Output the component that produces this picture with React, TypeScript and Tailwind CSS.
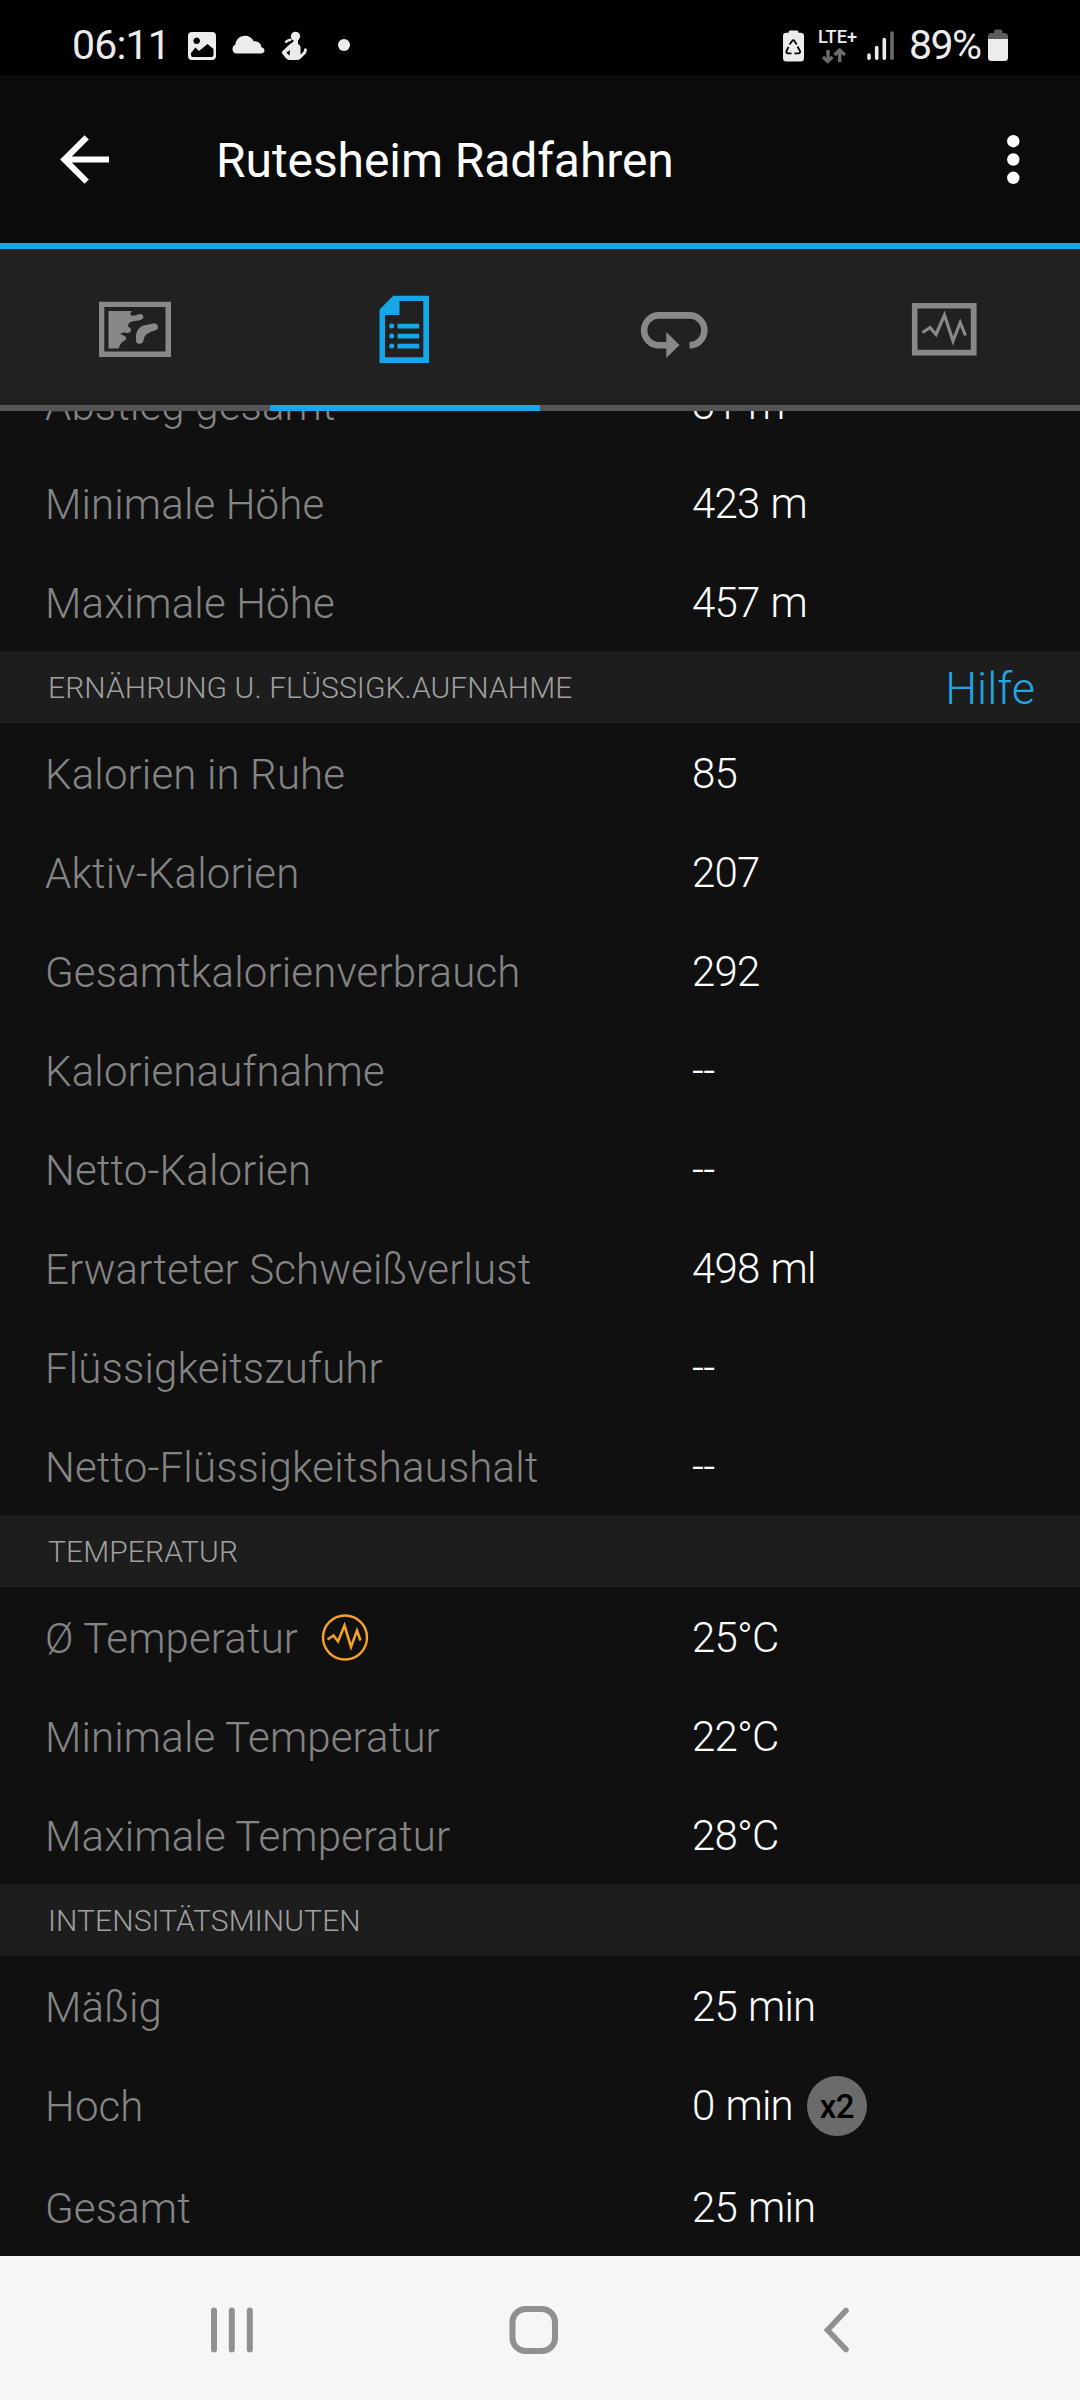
import type { ReactNode } from "react";

type Row = { label: string; value: string; chart?: boolean; badge?: string };
type Section = { title?: string; help?: string; rows: Row[] };

const sections: Section[] = [
  {
    rows: [
      { label: "Abstieg gesamt", value: "31 m" },
      { label: "Minimale Höhe", value: "423 m" },
      { label: "Maximale Höhe", value: "457 m" },
    ],
  },
  {
    title: "ERNÄHRUNG U. FLÜSSIGK.AUFNAHME",
    help: "Hilfe",
    rows: [
      { label: "Kalorien in Ruhe", value: "85" },
      { label: "Aktiv-Kalorien", value: "207" },
      { label: "Gesamtkalorienverbrauch", value: "292" },
      { label: "Kalorienaufnahme", value: "--" },
      { label: "Netto-Kalorien", value: "--" },
      { label: "Erwarteter Schweißverlust", value: "498 ml" },
      { label: "Flüssigkeitszufuhr", value: "--" },
      { label: "Netto-Flüssigkeitshaushalt", value: "--" },
    ],
  },
  {
    title: "TEMPERATUR",
    rows: [
      { label: "Ø Temperatur", value: "25°C", chart: true },
      { label: "Minimale Temperatur", value: "22°C" },
      { label: "Maximale Temperatur", value: "28°C" },
    ],
  },
  {
    title: "INTENSITÄTSMINUTEN",
    rows: [
      { label: "Mäßig", value: "25 min" },
      { label: "Hoch", value: "0 min", badge: "x2" },
      { label: "Gesamt", value: "25 min" },
    ],
  },
];

function StatusBar() {
  return (
    <div className="flex h-[75px] items-center bg-black text-[#ececec]">
      <span className="ml-[72px] w-[116px] text-[41px] leading-[75px] tracking-[-0.800px] pt-[15px]">06:11</span>
      <svg className="h-[75px] w-[170px]" viewBox="188 0 170 75" fill="#ececec">
        {/* gallery */}
        <path fillRule="evenodd" d="M192 32h20a4 4 0 0 1 4 4v20a4 4 0 0 1-4 4h-20a4 4 0 0 1-4-4V36a4 4 0 0 1 4-4zM191 53v2a2 2 0 0 0 2 2h18.500a2 2 0 0 0 2-2v-6l-6-5-8.500 7-3.500-3.500zM196.700 37.500a3.300 3.300 0 1 0 .01 0z" />
        {/* cloud */}
        <path d="M236 53.500a4.800 4.800 0 0 1-.7-9c.8-5 4.200-8.700 9.700-8.700 3.800 0 7 2 8.600 5.400 4.700-.3 7.400 2.200 7.900 6 4.300 1 3.700 6.300-.5 6.300z" />
        {/* fitness */}
        <circle cx="295.500" cy="36.300" r="4.600" />
        <path d="M284.500 42q2-3.500 7.500-3.500l-1 2.500q-3 0-4.500 2.300z" />
        <path fillRule="evenodd" d="M293.500 39.500h4.500v4.500q2.800 1 2.600 4.500-.2 2.500 0 6l2.500-2.500q1.200-1 1-3 1.200-1.500 2.600 0 .5 3.500-2 5.500l-4 4q-1.500 1.500-4.500 1.500h-6q-2.300 0-4-1.500l-4-5q-1-1.300.5-2.500l6.800-6.500q2.500-1.500 4-3zM286.300 52.500l3.200 3.300.6-5.500z" />
        <circle cx="344" cy="45" r="6" />
      </svg>
      <svg className="ml-auto h-[75px] w-[126px]" viewBox="778 0 126 75" fill="#ececec">
        {/* recycling battery */}
        <path d="M790.500 30.500h6.500q1.500 0 1.500 2.200h2q3.500 0 3.500 3.300v22q0 3.500-3.500 3.500h-14q-3.500 0-3.500-3.500V36q0-3.300 3.500-3.300h2q0-2.200 2-2.200z" />
        <g fill="none" stroke="#000" strokeWidth="1.800" strokeLinejoin="round">
          <path d="M789.500 44.500l3-4q.8-.8 1.600 0l2.600 4" />
          <path d="M788.500 47l-2 4q-.6 2.200 1.500 2.400h3.500" />
          <path d="M797.500 46.500l2.500 4.500q.5 2.300-1.500 2.400h-4" />
        </g>
        <text x="818" y="43" fontSize="18.500" fontWeight="500" textLength="39" lengthAdjust="spacingAndGlyphs">LTE+</text>
        <g fill="none" stroke="#6b6b6b" strokeWidth="3.400">
          <path d="M828 50v11M823 57l4.700 4.500L832.500 57" />
          <path d="M839.700 62V50.500M834.500 55l5.200-5 5.200 5" />
        </g>
        <g strokeWidth="3.600" strokeLinecap="round" stroke="#ececec">
          <path d="M869 55v3.300M876.700 47.500v10.800M884.300 39.500v18.800" />
          <path d="M892 33v25.300" stroke="#6b6b6b" />
        </g>
      </svg>
      <span className="ml-[5px] w-[77px] text-[41px] leading-[75px] tracking-[-1.500px] pt-[15px] whitespace-nowrap">89%</span>
      <svg className="mr-[68px] h-[75px] w-[26px]" viewBox="986 0 26 75">
        <path fill="#5c5c5c" d="M994 31.500q0-2 2-2h4.500q2 0 2 2V33h2q3.500 0 3.500 3.500V40h-20v-3.500q0-3.500 3.500-3.500h2.500z" />
        <path fill="#ececec" d="M988 39h20v18.500q0 3.500-3.500 3.500h-13q-3.500 0-3.500-3.500z" />
      </svg>
    </div>
  );
}

function AppBar() {
  return (
    <header className="flex h-[174px] items-center border-b-[6px] border-[#15a7e8] bg-[#0b0b0b]">
      <svg className="ml-[54px] h-[60px] w-[60px]" viewBox="0 0 60 60" fill="none" stroke="#fff" strokeWidth="6">
        <path d="M32.700 8.300L10.400 30.500l22.300 22.200M10.400 30.500H55" />
      </svg>
      <h1 className="ml-[102px] pt-[4px] text-[48px] leading-[56px] tracking-[-0.080px] text-white">Rutesheim Radfahren</h1>
      <svg className="ml-auto mr-[47px] h-[60px] w-[40px]" viewBox="0 0 40 60" fill="#fff">
        <circle cx="20.300" cy="12.200" r="6.200" />
        <circle cx="20.300" cy="30.500" r="6.200" />
        <circle cx="20.300" cy="48.800" r="6.200" />
      </svg>
    </header>
  );
}

function Tab({ active, children }: { active?: boolean; children: ReactNode }) {
  return (
    <div
      className={
        active
          ? "flex h-[162px] w-[270px] justify-center border-b-[6px] border-[#15a7e8] pt-[35px] text-[#15a7e8]"
          : "flex h-[162px] w-[270px] justify-center border-b-[6px] border-[#555] pt-[35px] text-[#888]"
      }
    >
      <svg className="h-[90px] w-[90px]" viewBox="0 0 90 90" fill="currentColor">
        {children}
      </svg>
    </div>
  );
}

function Tabs() {
  return (
    <nav className="flex bg-[#212121]">
      <Tab>
        <path fillRule="evenodd" d="M9 17.700h72v55.300H9zM14.300 23v44.500h61.200V23z" />
        <path d="M18.500 27h23.300q-2.500 3-.5 4.500 3.200.5 6-.8 4-1.800 6 1 .8 3.500-3.500 4.500l-6.500 1q-5 .5-5.500 5.300 3.800 1.500 3 4.800-1.200 2.500-5 1.500-3.500-.8-5.500 1.500 5 1.300 6 3.500.2 2-3 3.500-3.800 2.800-4.500 7.300H18.500z" />
        <path d="M46 52q0-4.500 3.500-8 2.500-2.800 6.500-3 3-.2 5.500-1.300 4.500-1.200 6.300 1.800 1 4-2.800 5-7.500 2-10 5.500-1.300 2-1.500 4.500-1 3.600-4.300 3.300-3.500-.3-3.200-4z" />
      </Tab>
      <Tab active>
        <path fillRule="evenodd" d="M33.300 11.700H69V79H19.500V25.500zM39.500 17v14H25v42.200h38.300V17z" />
        <circle cx="31.700" cy="42" r="2.500" />
        <circle cx="31.700" cy="52" r="2.500" />
        <circle cx="31.700" cy="62" r="2.500" />
        <path d="M37.500 39.700h21.700v4.700H37.500zM37.500 49.700h21.700v4.700H37.500zM37.500 59.700h21.700v4.700H37.500z" />
      </Tab>
      <Tab>
        <path fill="none" stroke="currentColor" strokeWidth="6.600" d="M59.500 61.200a14.900 14.900 0 0 0 0-29.800H29a14.900 14.900 0 0 0 0 29.800h9" />
        <path d="M36.300 48L49.500 61 36.300 74z" />
      </Tab>
      <Tab>
        <path fillRule="evenodd" d="M11.900 19h64.700v52.500H11.900zM17.500 24.500v41.300h53.300V24.500z" />
        <path fill="none" stroke="currentColor" strokeWidth="3.200" d="M22.500 48.500l7.500-5 6 7 8.500-19.500 8.500 26 7.200-18.500 5.300 13" />
      </Tab>
    </nav>
  );
}

function SectionHeader({ title, help }: { title: string; help?: string }) {
  return (
    <div className="flex h-[72px] items-center justify-between bg-[#1d1d1d] pr-[45px] pl-[48px]">
      <h2 className="text-[30px] font-light tracking-[0.100px] text-[#a0a0a0]">{title}</h2>
      {help && <a className="pt-[3px] text-[45px] font-light text-[#22a5e0]">{help}</a>}
    </div>
  );
}

function DetailRow({ row }: { row: Row }) {
  return (
    <div className={row.badge ? "flex h-[102px] items-start" : "flex h-[99px] items-start"}>
      <div className="flex h-[99px] w-[692px] items-center pt-[2px] pl-[45px]">
        <span className="pt-[2px] text-[42px] leading-[50px] font-light tracking-[0.140px] text-[#848484]">{row.label}</span>
        {row.chart && (
          <svg className="ml-[23px] h-[48px] w-[48px]" viewBox="0 0 48 48" fill="none" stroke="#f5a029">
            <circle cx="24" cy="23.500" r="22" strokeWidth="2.400" />
            <path strokeWidth="2.600" d="M6.500 25.500l6-4 4.500 6 6.500-16 6.500 21.500 6-16.500 3.500 10" />
          </svg>
        )}
      </div>
      <span className="pt-[1px] text-[42px] leading-[99px] font-light tracking-[-0.800px] [word-spacing:1.600px] text-white">{row.value}</span>
      {row.badge && (
        <span className="mt-[21px] ml-[14px] flex h-[60px] w-[60px] items-center justify-center rounded-full bg-[#6b6b6b] pt-[2px] text-[33px] font-medium tracking-[-0.500px] text-black">
          {row.badge}
        </span>
      )}
    </div>
  );
}

function NavBar() {
  return (
    <div className="flex h-[144px] items-center bg-[#f6f6f6]">
      <svg className="ml-[202px] h-[60px] w-[60px]" viewBox="0 0 60 60" stroke="#909090" strokeWidth="6" strokeLinecap="round">
        <path d="M12 12.500v39M29.800 12.500v39M47.800 12.500v39" />
      </svg>
      <svg className="ml-[242px] h-[60px] w-[60px]" viewBox="0 0 60 60" fill="none" stroke="#909090" strokeWidth="6">
        <rect x="8.500" y="11" width="42.500" height="42" rx="13" />
      </svg>
      <svg className="ml-[242px] h-[60px] w-[60px]" viewBox="0 0 60 60" fill="none" stroke="#909090" strokeWidth="5.500" strokeLinecap="round">
        <path d="M40 12.500L21.500 32 40 51.500" />
      </svg>
    </div>
  );
}

export default function App() {
  return (
    <div className="flex h-[2400px] w-[1080px] flex-col overflow-hidden bg-[#101010] font-['Roboto',sans-serif]">
      <StatusBar />
      <AppBar />
      <Tabs />
      <main className="h-[1845px] overflow-hidden">
        {/* list is scrolled, first row is partly under the tabs */}
        <div className="-mt-[57px]">
          {sections.map((section, index) => (
            <section key={index}>
              {section.title && <SectionHeader title={section.title} help={section.help} />}
              {section.rows.map((row) => (
                <DetailRow key={row.label} row={row} />
              ))}
            </section>
          ))}
        </div>
      </main>
      <NavBar />
    </div>
  );
}
